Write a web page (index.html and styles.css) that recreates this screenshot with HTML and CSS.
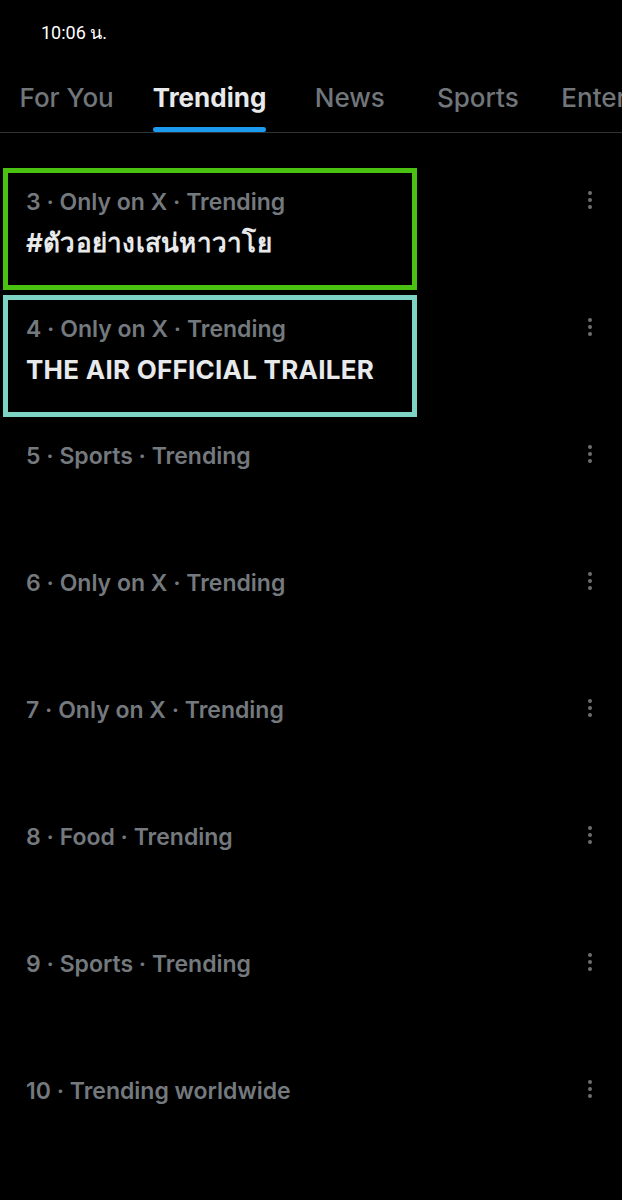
FILE: index.html
```html
<!DOCTYPE html>
<html lang="th">
<head>
    <meta charset="UTF-8">
    <meta name="viewport" content="width=device-width, initial-scale=1.0">
    <title>Trending</title>
    <link rel="stylesheet" href="styles.css">
</head>
<body>
    <div class="status-bar">10:06 น.</div>

    <nav class="tabs">
        <span class="tab">For You</span>
        <span class="tab active">Trending</span>
        <span class="tab">News</span>
        <span class="tab">Sports</span>
        <span class="tab">Entertainment</span>
    </nav>

    <main class="trend-list">
        <div class="trend boxed green">
            <div class="trend-text">
                <div class="meta">3 · Only on X · Trending</div>
                <div class="title">#ตัวอย่างเสน่หาวาโย</div>
            </div>
            <span class="more"><i></i><i></i><i></i></span>
        </div>
        <div class="trend boxed teal">
            <div class="trend-text">
                <div class="meta">4 · Only on X · Trending</div>
                <div class="title">THE AIR OFFICIAL TRAILER</div>
            </div>
            <span class="more"><i></i><i></i><i></i></span>
        </div>
        <div class="trend">
            <div class="trend-text">
                <div class="meta">5 · Sports · Trending</div>
            </div>
            <span class="more"><i></i><i></i><i></i></span>
        </div>
        <div class="trend">
            <div class="trend-text">
                <div class="meta">6 · Only on X · Trending</div>
            </div>
            <span class="more"><i></i><i></i><i></i></span>
        </div>
        <div class="trend">
            <div class="trend-text">
                <div class="meta">7 · Only on X · Trending</div>
            </div>
            <span class="more"><i></i><i></i><i></i></span>
        </div>
        <div class="trend">
            <div class="trend-text">
                <div class="meta">8 · Food · Trending</div>
            </div>
            <span class="more"><i></i><i></i><i></i></span>
        </div>
        <div class="trend">
            <div class="trend-text">
                <div class="meta">9 · Sports · Trending</div>
            </div>
            <span class="more"><i></i><i></i><i></i></span>
        </div>
        <div class="trend">
            <div class="trend-text">
                <div class="meta">10 · Trending worldwide</div>
            </div>
            <span class="more"><i></i><i></i><i></i></span>
        </div>
    </main>
</body>
</html>
```

FILE: styles.css
```css
body {
    margin: 0;
    padding: 0;
    background-color: #000;
    color: #e7e9ea;
    font-family: Inter, "Noto Sans", sans-serif;
    overflow: hidden;
}

.status-bar {
    height: 62px;
    padding: 18px 0 0 41px;
    box-sizing: border-box;
    font-family: Roboto, "Noto Sans", sans-serif;
    font-size: 18px;
    color: #fff;
}

.tabs {
    display: flex;
    height: 70px;
    border-bottom: 1px solid #2f3336;
    white-space: nowrap;
    overflow: hidden;
}

.tab {
    position: relative;
    flex-shrink: 0;
    min-width: 128px;
    padding: 20px 19.5px 0;
    box-sizing: border-box;
    text-align: center;
    font-size: 26px;
    font-weight: 500;
    color: #71767b;
}

.tab.active {
    color: #e7e9ea;
    font-weight: 700;
}

.tab.active::after {
    content: "";
    position: absolute;
    left: 19.5px;
    right: 19.5px;
    bottom: 0;
    height: 5px;
    border-radius: 3px;
    background-color: #1d9bf0;
}

.trend-list {
    padding-top: 32px;
}

.trend {
    position: relative;
    display: flex;
    align-items: flex-start;
    height: 127px;
    padding: 23px 22px 0 26px;
    box-sizing: border-box;
}

.trend-text {
    flex: 1;
}

.meta {
    font-size: 23px;
    line-height: 28px;
    font-weight: 600;
    color: #74797e;
}

.title {
    margin-top: 12px;
    font-size: 26px;
    line-height: 30px;
    font-weight: 700;
    letter-spacing: 0.25px;
    color: #e7e9ea;
}

.more {
    display: flex;
    flex-direction: column;
    align-items: center;
    gap: 3px;
    width: 20px;
    padding-top: 3px;
}

.more i {
    width: 4px;
    height: 4px;
    border-radius: 50%;
    background-color: #6b6f73;
}

/* highlight frames drawn over the first two rows */
.boxed::after {
    content: "";
    position: absolute;
    top: 3px;
    left: 3px;
    width: 414px;
    height: 122px;
    border: 5px solid;
    box-sizing: border-box;
}

.green::after {
    border-color: #4bc112;
}

.teal::after {
    border-color: #7dd4c4;
}
```
